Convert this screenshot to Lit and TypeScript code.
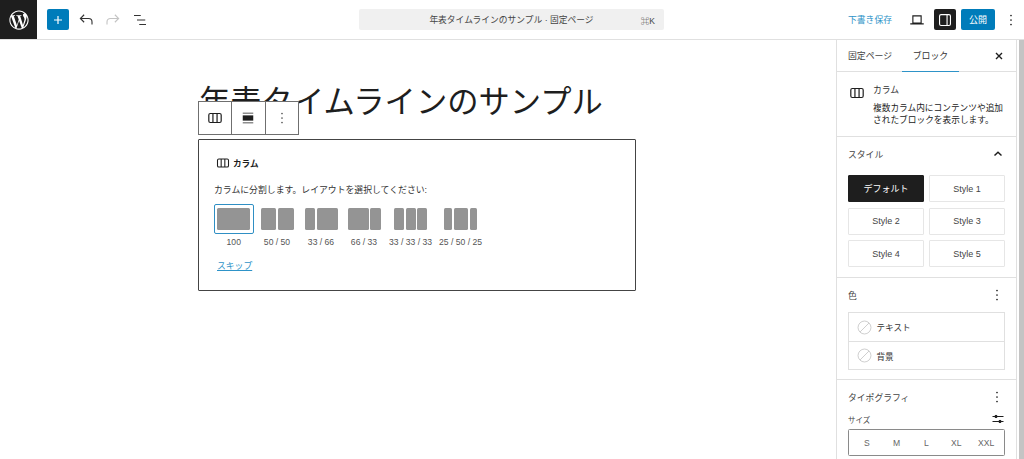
import { LitElement, html, css } from "lit";
import { customElement } from "lit/decorators.js";

const columnsIcon = (s: number) => html`<svg width=${s} height=${s} viewBox="0 0 24 24" fill="none" stroke="#1e1e1e" stroke-width="1.6"><rect x="3.75" y="6" width="16.5" height="12" rx="2"/><path d="M9.25 6v12M14.75 6v12"/></svg>`;
const dots = (c = "#1e1e1e") => html`<svg width="24" height="24" viewBox="0 0 24 24" fill=${c}><circle cx="12" cy="7.5" r="0.85"/><circle cx="12" cy="12" r="0.85"/><circle cx="12" cy="16.5" r="0.85"/></svg>`;
const noColor = html`<svg width="15" height="15" viewBox="0 0 16 16" fill="none" stroke="#ccc" stroke-width="1"><circle cx="8" cy="8" r="6.9"/><path d="M3.2 12.8 12.8 3.2"/></svg>`;

const layouts: { label: string; cols: number[]; width: number }[] = [
  { label: "100", cols: [33], width: 39.5 },
  { label: "50 / 50", cols: [15.75, 15.75], width: 47 },
  { label: "33 / 66", cols: [10.5, 21], width: 41 },
  { label: "66 / 33", cols: [21, 10.5], width: 45 },
  { label: "33 / 33 / 33", cols: [10, 10, 10], width: 48 },
  { label: "25 / 50 / 25", cols: [8, 14.5, 7.5], width: 52 },
];

@customElement("app-root")
export class AppRoot extends LitElement {
  static styles = css`
    :host { display: block; width: 1024px; height: 459px; overflow: hidden; background: #fff; color: #1e1e1e; font-family: "Liberation Sans", "Noto Sans CJK JP", sans-serif; font-size: 9px; }
    * { box-sizing: border-box; }
    svg { display: block; flex: none; }
    .top { height: 40px; border-bottom: 1px solid #e0e0e0; display: flex; align-items: center; }
    .wp { width: 37px; height: 39px; background: #1e1e1e; display: flex; align-items: center; justify-content: center; }
    .add { width: 22px; height: 21px; margin-left: 10px; background: #007cba; border-radius: 2px; display: flex; align-items: center; justify-content: center; }
    .tools { display: flex; align-items: center; gap: 9px; margin-left: 8px; }
    .cmd { width: 305px; height: 21px; margin-left: 210px; background: #f0f0f0; border-radius: 2px; display: flex; align-items: center; justify-content: center; position: relative; color: #444; font-size: 8.75px; }
    .cmd b { position: absolute; right: 9px; font-weight: 400; font-size: 8.5px; }
    .right { margin-left: auto; display: flex; align-items: center; }
    .save { color: #2e93c8; font-size: 8.8px; margin-right: 16px; white-space: nowrap; }
    .device { margin-right: 8px; }
    .toggle { width: 22px; height: 21px; background: #1e1e1e; border-radius: 2px; display: flex; align-items: center; justify-content: center; margin-right: 5px; }
    .publish { width: 34px; height: 21px; background: #007cba; color: #fff; border-radius: 2px; display: flex; align-items: center; justify-content: center; font-size: 9px; margin-right: 4px; }
    .more { width: 24px; margin-right: 1px; display: flex; justify-content: center; }

    .body { display: flex; height: 419px; }
    .canvas { width: 836px; flex: none; padding: 40px 0 0 199px; position: relative; }
    h1 { margin: 0; font-size: 31.3px; font-weight: 400; line-height: 46px; color: #1e1e1e; white-space: nowrap; }
    .blocktools { position: absolute; left: 198px; top: 61px; width: 101px; height: 34px; display: flex; background: #fff; border: 1px solid #6f6f6f; }
    .blocktools > div { flex: 1; display: flex; align-items: center; justify-content: center; }
    .blocktools > div + div { border-left: 1px solid #6f6f6f; }
    .placeholder { margin: 13px 0 0 -1px; width: 438px; height: 152px; border: 1px solid #444; border-radius: 1px; padding: 15px 15px 0; }
    .ph-title { display: flex; align-items: center; gap: 2px; font-weight: 700; font-size: 8.6px; color: #1e1e1e; height: 16px; margin-left: 1px; }
    .ph-desc { margin-top: 13px; font-size: 8.85px; line-height: 13px; color: #333; }
    .layouts { display: flex; margin-top: 7px; }
    .layout { display: flex; flex-direction: column; align-items: center; flex: none; }
    .thumb { height: 30px; display: flex; align-items: center; justify-content: center; gap: 1.5px; border-radius: 2px; }
    .thumb.sel { width: 39.5px; border: 1.5px solid #2f8fc4; }
    .thumb i { display: block; height: 22px; background: #949494; border-radius: 1.5px; }
    .layout span { font-size: 8.6px; color: #555; line-height: 10px; margin-top: 3px; white-space: nowrap; }
    .skip { display: inline-block; margin: 13px 0 0 3px; color: #2e93c8; font-size: 8.8px; text-decoration: underline; line-height: 13px; }

    aside { width: 181px; flex: none; border-left: 1px solid #e0e0e0; border-right: 1px solid #e0e0e0; }
    .scroll { width: 7px; flex: none; padding-left: 1.5px; }
    .scroll div { height: 100%; background: #c4c4c4; }
    .tabs { height: 32px; display: flex; align-items: center; border-bottom: 1px solid #e0e0e0; position: relative; color: #444; font-size: 8.9px; }
    .tabs .t1 { margin-left: 11px; }
    .tabs .t2 { position: absolute; left: 65px; top: 0; width: 57px; height: 32px; display: flex; align-items: center; justify-content: center; border-bottom: 1.5px solid #2e93c8; color: #333; }
    .tabs svg { position: absolute; right: 10px; top: 9px; }
    .card { height: 65px; border-bottom: 1px solid #e0e0e0; display: flex; padding: 12px 0 0 11px; gap: 7px; }
    .card h4 { margin: 0; font-weight: 400; font-size: 8.8px; line-height: 13px; color: #333; }
    .card p { margin: 5px 0 0; font-size: 8.7px; line-height: 12px; color: #222; width: 136px; }
    .panel { padding: 0 11px; }
    .ph { display: flex; align-items: center; justify-content: space-between; font-size: 8.8px; color: #444; }
    .ph .d { margin-right: -4px; }
    .styles { height: 141px; border-bottom: 1px solid #e0e0e0; }
    .styles .ph { height: 34px; margin-bottom: 4px; }
    .sgrid { display: grid; grid-template-columns: 76px 76px; column-gap: 5px; row-gap: 5.5px; grid-auto-rows: 27px; }
    .sgrid div { border: 1px solid #e6e6e6; display: flex; align-items: center; justify-content: center; font-size: 9px; color: #444; border-radius: 1px; }
    .sgrid div.on { background: #1e1e1e; color: #fff; border-color: #1e1e1e; }
    .colorsp { height: 102px; border-bottom: 1px solid #e0e0e0; }
    .colorsp .ph { height: 34px; }
    .cbox { border: 1px solid #e0e0e0; }
    .crow { height: 28px; display: flex; align-items: center; padding-left: 7.5px; gap: 5px; font-size: 8.6px; color: #333; }
    .crow + .crow { border-top: 1px solid #e0e0e0; }
    .typo .ph { height: 34px; }
    .size { display: flex; justify-content: space-between; align-items: center; height: 14px; font-size: 7.5px; color: #444; margin-top: -2px; }
    .seg { margin-top: 3px; height: 27px; border: 1px solid #8a8a8a; border-radius: 1.5px; display: grid; grid-template-columns: repeat(5, 1fr); align-items: center; justify-items: center; font-size: 8.6px; color: #666; padding: 0 3px; }
  `;

  render() {
    return html`
      <div class="top">
        <div class="wp">
          <svg width="22" height="22" viewBox="0 0 24 24" fill="#fff"><path d="M12 1.5C6.2 1.5 1.5 6.2 1.5 12S6.2 22.5 12 22.5 22.5 17.8 22.5 12 17.8 1.5 12 1.5ZM2.6 12c0-1.4.3-2.7.8-3.8l4.5 12.3C4.7 18.9 2.6 15.7 2.6 12Zm9.4 9.4c-.9 0-1.8-.1-2.7-.4l2.8-8.2 2.9 7.9.1.1c-1 .4-2 .6-3.1.6Zm1.3-13.8c.6 0 1.1-.1 1.1-.1.5-.1.4-.8-.1-.8 0 0-1.5.1-2.5.1-.9 0-2.4-.1-2.4-.1-.5 0-.6.8-.1.8 0 0 .5.1 1 .1l1.4 3.9-2 6.1-3.4-10c.6 0 1.1-.1 1.1-.1.5-.1.4-.8-.1-.8 0 0-1.5.1-2.5.1h-.6C6.3 4.2 9 2.6 12 2.6c2.3 0 4.3.9 5.9 2.3h-.1c-.9 0-1.5.8-1.5 1.6 0 .7.4 1.3.9 2.1.4.6.8 1.4.8 2.6 0 .8-.3 1.8-.7 3.1l-1 3.2-3-9.9Zm3.4 12.5 2.9-8.3c.5-1.3.7-2.4.7-3.3 0-.3 0-.6-.1-.9.7 1.3 1.1 2.8 1.1 4.4 0 3.5-1.9 6.5-4.6 8.1Z"/></svg>
        </div>
        <div class="add"><svg width="14" height="14" viewBox="0 0 14 14" stroke="#fff" stroke-width="1.2"><path d="M7 3v8M3 7h8"/></svg></div>
        <div class="tools">
          <svg width="18" height="18" viewBox="0 0 24 24" fill="none" stroke="#333" stroke-width="1.5"><path d="M20 18v-3.5a4.5 4.5 0 0 0-4.5-4.5H5M9.5 5 4.5 10l5 5"/></svg>
          <svg width="18" height="18" viewBox="0 0 24 24" fill="none" stroke="#c4c4c4" stroke-width="1.5"><path d="M4 18v-3.5A4.5 4.5 0 0 1 8.5 10H19M14.5 5l5 5-5 5"/></svg>
          <svg width="18" height="18" viewBox="0 0 24 24" fill="none" stroke="#333" stroke-width="1.5"><path d="M4 6h9M8 12h11M11 18h9"/></svg>
        </div>
        <div class="cmd">年表タイムラインのサンプル · 固定ページ<b>⌘K</b></div>
        <div class="right">
          <span class="save">下書き保存</span>
          <div class="device"><svg width="18" height="18" viewBox="0 0 24 24" fill="none" stroke="#1e1e1e" stroke-width="1.5"><path d="M6.5 6.5h11v9.5h-11zM3 17.2h18"/></svg></div>
          <div class="toggle"><svg width="18" height="18" viewBox="0 0 24 24" fill="none" stroke="#fff" stroke-width="1.5"><rect x="4.75" y="4.75" width="14.5" height="14.5" rx="2"/><path d="M14.75 4.75v14.5"/></svg></div>
          <div class="publish">公開</div>
          <div class="more">${dots()}</div>
        </div>
      </div>
      <div class="body">
        <div class="canvas">
          <h1>年表タイムラインのサンプル</h1>
          <div class="blocktools">
            <div>${columnsIcon(18)}</div>
            <div><svg width="18" height="18" viewBox="0 0 24 24" fill="#1e1e1e"><path d="M5 5h14v1H5zM5 18h14v1H5z"/><rect x="5" y="8.5" width="14" height="7"/></svg></div>
            <div>${dots("#555")}</div>
          </div>
          <div class="placeholder">
            <div class="ph-title">${columnsIcon(16)}<span>カラム</span></div>
            <div class="ph-desc">カラムに分割します。レイアウトを選択してください:</div>
            <div class="layouts">
              ${layouts.map((l, i) => html`
                <div class="layout" style="width:${l.width}px">
                  <div class="thumb ${i === 0 ? "sel" : ""}">
                    ${l.cols.map((w) => html`<i style="width:${w}px"></i>`)}
                  </div>
                  <span>${l.label}</span>
                </div>`)}
            </div>
            <a class="skip">スキップ</a>
          </div>
        </div>
        <aside>
          <div class="tabs">
            <span class="t1">固定ページ</span>
            <span class="t2">ブロック</span>
            <svg width="14" height="14" viewBox="0 0 14 14" stroke="#1e1e1e" stroke-width="1.4"><path d="M4 4l6 6M10 4l-6 6"/></svg>
          </div>
          <div class="card">
            ${columnsIcon(18)}
            <div><h4>カラム</h4><p>複数カラム内にコンテンツや追加されたブロックを表示します。</p></div>
          </div>
          <div class="panel styles">
            <div class="ph"><span>スタイル</span><svg width="14" height="14" viewBox="0 0 14 14" fill="none" stroke="#1e1e1e" stroke-width="1.5"><path d="M3.5 8.5 7 5.2l3.5 3.3"/></svg></div>
            <div class="sgrid">
              <div class="on">デフォルト</div><div>Style 1</div><div>Style 2</div><div>Style 3</div><div>Style 4</div><div>Style 5</div>
            </div>
          </div>
          <div class="panel colorsp">
            <div class="ph"><span>色</span><span class="d">${dots()}</span></div>
            <div class="cbox">
              <div class="crow">${noColor}<span>テキスト</span></div>
              <div class="crow">${noColor}<span>背景</span></div>
            </div>
          </div>
          <div class="panel typo">
            <div class="ph"><span>タイポグラフィ</span><span class="d">${dots()}</span></div>
            <div class="size"><span>サイズ</span><svg width="14" height="14" viewBox="0 0 14 14" stroke="#1e1e1e" stroke-width="1" fill="#1e1e1e"><path d="M1.5 4.5h11M1.5 9.5h11"/><circle cx="5" cy="4.5" r="1.2"/><circle cx="9" cy="9.5" r="1.2"/></svg></div>
            <div class="seg"><span>S</span><span>M</span><span>L</span><span>XL</span><span>XXL</span></div>
          </div>
        </aside>
        <div class="scroll"><div></div></div>
      </div>
    `;
  }
}
